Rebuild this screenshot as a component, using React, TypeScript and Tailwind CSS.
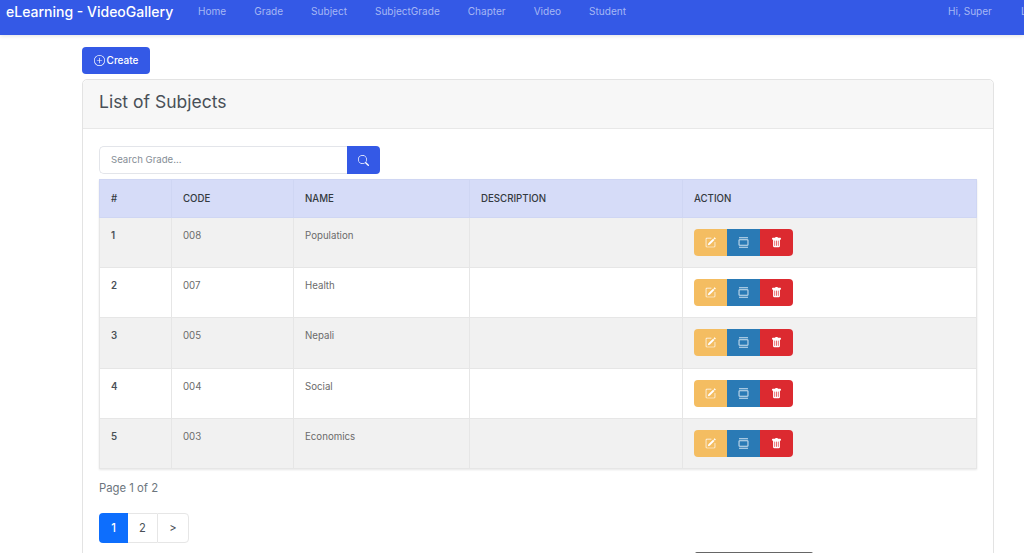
import { BsPencilSquare, BsPlusCircle, BsSearch, BsTrashFill } from "react-icons/bs";

const rows = [
  { n: 1, code: "008", name: "Population" },
  { n: 2, code: "007", name: "Health" },
  { n: 3, code: "005", name: "Nepali" },
  { n: 4, code: "004", name: "Social" },
  { n: 5, code: "003", name: "Economics" },
];

const links = ["Home", "Grade", "Subject", "SubjectGrade", "Chapter", "Video", "Student"];

function ViewIcon() {
  return (
    <svg width="11" height="11" viewBox="0 0 16 16" fill="none" stroke="currentColor" strokeWidth="1.5">
      <path d="M1.5 1h13" />
      <rect x="1.5" y="4" width="13" height="8" rx="0.8" />
      <path d="M1.5 15h13" />
    </svg>
  );
}

export default function App() {
  return (
    <div className="h-[553px] w-[1024px] overflow-hidden bg-white font-['Inter','Liberation_Sans',sans-serif] text-[#495057]">
      <nav className="flex h-[35px] items-start overflow-hidden bg-[#3459e6] shadow-[0_1px_4px_rgba(0,0,0,0.12)]">
        <div className="ml-[6px] mt-[2px] w-[178px] shrink-0 whitespace-nowrap text-[14px] font-medium leading-[19px] text-white">
          eLearning - VideoGallery
        </div>
        <ul className="mt-[4px] flex">
          {links.map((l) => (
            <li key={l} className="whitespace-nowrap px-[14px] text-[10.05px] leading-[15px] text-[#a6b7f4]">
              {l}
            </li>
          ))}
        </ul>
        <div className="ml-auto mt-[4px] flex shrink-0 whitespace-nowrap text-[10.05px] leading-[15px] text-[#a6b7f4]">
          <span className="mr-[29px]">Hi, Super</span>
          <span className="mr-[-30px]">Logout</span>
        </div>
      </nav>

      <main className="ml-[82px] w-[912px] pt-[12px]">
        <button className="flex h-[27px] w-[68px] items-center justify-center gap-[2px] rounded-[4px] bg-[#3459e6] text-[10px] font-medium text-white">
          <BsPlusCircle className="text-[11px]" />
          Create
        </button>

        <section className="mt-[5px] h-[600px] rounded-[5px] border border-[#e3e3e3]">
          <header className="flex h-[49px] items-center rounded-t-[5px] border-b border-[#e8e8e8] bg-[#f7f7f7] px-[16px] pb-[4px] text-[17.5px] font-normal text-[#495057]">
            List of Subjects
          </header>

          <div className="px-[16px] pt-[17px]">
            <div className="flex h-[28px] w-[281px]">
              <div className="flex flex-1 items-center rounded-l-[5px] border border-r-0 border-[#e3e5ea] bg-white pl-[11px] text-[9.6px] text-[#868e96]">
                Search Grade...
              </div>
              <button className="flex w-[33px] items-center justify-center rounded-r-[4px] bg-[#3459e6] text-[11px] text-white">
                <BsSearch />
              </button>
            </div>

            <table className="mt-[5px] w-[877px] table-fixed border-collapse text-[9.7px] shadow-[0_1px_2px_rgba(0,0,0,0.1)]">
              <colgroup>
                <col className="w-[72px]" />
                <col className="w-[122px]" />
                <col className="w-[176px]" />
                <col className="w-[213px]" />
                <col className="w-[294px]" />
              </colgroup>
              <thead>
                <tr className="h-[38px] border border-[#cfd6f3] bg-[#d6dcf8] text-left text-[#343a40]">
                  {["#", "CODE", "NAME", "DESCRIPTION", "ACTION"].map((h) => (
                    <th key={h} className="border-r border-[#cfd6f3] pl-[11px] pt-[1px] text-[9.7px] font-medium">
                      {h}
                    </th>
                  ))}
                </tr>
              </thead>
              <tbody>
                {rows.map((r) => (
                  <tr key={r.n} className={`h-[50.2px] border border-[#e6e6e6] ${r.n % 2 ? "bg-[#f1f1f1]" : "bg-white"}`}>
                    <td className="border-r border-[#e6e6e6] pl-[11px] pt-[11px] align-top font-semibold text-[#495057]">{r.n}</td>
                    <td className="border-r border-[#e6e6e6] pl-[11px] pt-[11px] align-top text-[#6b6b6b]">{r.code}</td>
                    <td className="border-r border-[#e6e6e6] pl-[11px] pt-[11px] align-top text-[#6b6b6b]">{r.name}</td>
                    <td className="border-r border-[#e6e6e6]" />
                    <td className="pl-[11px] align-top pt-[11px]">
                      <div className="flex h-[27px] w-[99px] overflow-hidden rounded-[4px] text-[11px] text-white">
                        <span className="flex w-[33px] items-center justify-center bg-[#f4bd61]"><BsPencilSquare /></span>
                        <span className="flex w-[33px] items-center justify-center bg-[#2a7ab5] text-[#cfe2f0]"><ViewIcon /></span>
                        <span className="flex w-[33px] items-center justify-center bg-[#dc2a30]"><BsTrashFill /></span>
                      </div>
                    </td>
                  </tr>
                ))}
              </tbody>
            </table>

            <p className="mt-[11px] text-[11.3px] leading-[16px] text-[#6c757d]">Page 1 of 2</p>

            <div className="mt-[17px] flex h-[30px] w-[90px] text-[11.2px]">
              <span className="flex w-[29px] items-center justify-center rounded-l-[4px] bg-[#0d6efd] font-medium text-white">1</span>
              <span className="flex w-[29px] items-center justify-center border-y border-[#e6e6e6] text-[#495057]">2</span>
              <span className="flex w-[32px] items-center justify-center rounded-r-[4px] border border-[#e6e6e6] text-[#495057]">&gt;</span>
            </div>

            <div className="ml-[596px] mt-[9px] h-[20px] w-[118px] rounded-t-[2px] border-t border-[#666666]" />
          </div>
        </section>
      </main>
    </div>
  );
}
